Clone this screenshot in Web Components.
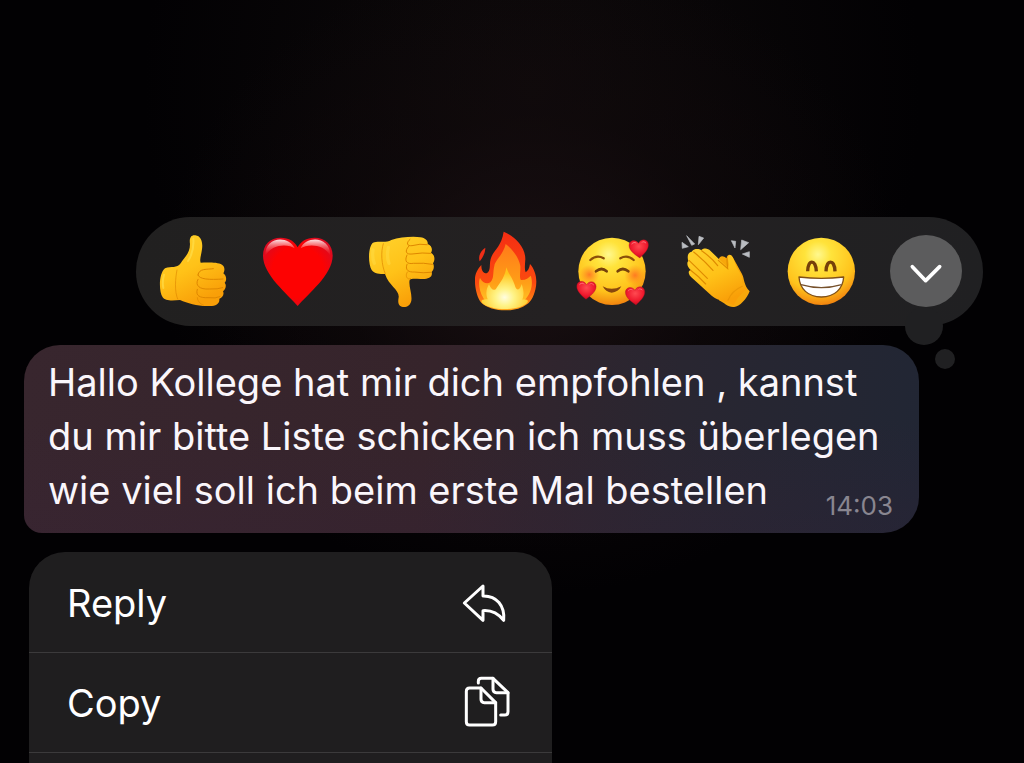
<!DOCTYPE html>
<html lang="de">
  <head>
    <meta charset="utf-8" />
    <meta name="viewport" content="width=device-width, initial-scale=1" />
    <title>Chat</title>
    <style>
      body {
        margin: 0;
        background: #020103;
        font-family: Inter, "Liberation Sans", sans-serif;
      }
    </style>
  </head>

  <body>
    <message-overlay>
      <reaction-bar slot="reactions">
        <reaction-button name="thumbs-up"></reaction-button>
        <reaction-button name="heart"></reaction-button>
        <reaction-button name="thumbs-down"></reaction-button>
        <reaction-button name="fire"></reaction-button>
        <reaction-button name="adore"></reaction-button>
        <reaction-button name="clap"></reaction-button>
        <reaction-button name="grin"></reaction-button>
        <reaction-button name="more"></reaction-button>
      </reaction-bar>
      <chat-bubble slot="message" time="14:03"
        >Hallo Kollege hat mir dich empfohlen , kannst<br />du mir bitte Liste schicken ich muss überlegen<br />wie viel soll ich beim erste Mal bestellen</chat-bubble
      >
      <context-menu slot="menu">
        <menu-row icon="reply">Reply</menu-row>
        <menu-row icon="copy">Copy</menu-row>
      </context-menu>
    </message-overlay>
  </body>

  <script type="text/javascript">
    const smallHeart = (x, y, turn) => `
      <g transform="translate(${x} ${y}) rotate(${turn})">
        <path fill="url(#h)" stroke="#a80b20" stroke-width="1" d="M0 29C-9 21-30 7-29-11C-28-26-8-30 0-15C8-30 28-26 29-11C30 7 9 21 0 29Z"/>
        <path fill="#ff8c91" opacity=".7" d="M-22-12C-20-22-9-22-6-15C-11-19-17-18-22-12ZM8-15C12-22 22-21 23-12C18-18 13-19 8-15Z"/>
      </g>`;

    const skin = `
      <linearGradient id="s" x1="0" y1="0" x2=".5" y2="1">
        <stop offset="0" stop-color="#ffd32e"/><stop offset=".55" stop-color="#ffc218"/><stop offset="1" stop-color="#f99f08"/>
      </linearGradient>`;

    const face = `
      <radialGradient id="f" cx=".45" cy=".25" r=".78">
        <stop offset="0" stop-color="#fff88e"/><stop offset=".25" stop-color="#ffe33b"/>
        <stop offset=".7" stop-color="#ffc31c"/><stop offset="1" stop-color="#f07c0d"/>
      </radialGradient>`;

    const REACTIONS = {
      "thumbs-up": {
        box: "81 75 216 216",
        art: `<defs>${skin}</defs>
          <path fill="url(#s)" d="M105 175C125 168 140 176 152 160C164 141 180 130 180 102C177 83 184 74 196 76C214 78 219 98 216 118C214 135 208 148 212 158C230 158 262 156 276 164C286 170 284 184 280 190C291 198 290 212 284 218C291 226 286 240 279 244C284 254 276 264 268 266C270 280 258 288 240 288C205 290 175 280 150 270C130 272 105 274 98 262C86 245 86 190 105 175Z"/>
          <path fill="none" stroke="#ffe455" stroke-width="6" stroke-linecap="round" opacity=".55" d="M190 86C192 112 188 132 174 153M102 194Q96 214 100 234"/>
          <g fill="none" stroke="#df8700" stroke-width="3" stroke-linecap="round">
            <path d="M204 195C206 174 232 179 250 176"/>
            <path d="M204 195C207 208 237 210 279 207"/>
            <path d="M204 208C194 226 208 239 238 237Q264 238 278 233"/>
            <path d="M202 238C195 258 211 264 234 263Q258 266 270 260"/>
            <path d="M202 263Q202 278 221 286M141 180C136 205 133 244 143 267" opacity=".65"/>
          </g>`
      },
      heart: {
        box: "395 75 216 216",
        art: `<defs>
            <linearGradient id="l" x1="0" y1="0" x2="0" y2="1"><stop offset="0" stop-color="#fff" stop-opacity=".9"/><stop offset="1" stop-color="#ff4340" stop-opacity="0"/></linearGradient>
            <radialGradient id="r" cx=".5" cy=".5" r=".57"><stop offset=".65" stop-color="#fd0202"/><stop offset="1" stop-color="#dc0a20"/></radialGradient>
          </defs>
          <path fill="url(#r)" d="M502 288C473 252 398 195 398 137C398 103 420 83 451 83C476 83 493 94 502 112C511 94 528 83 553 83C584 83 607 103 607 137C607 195 531 252 502 288Z"/>
          <path fill="url(#l)" d="M405 138C403 77 476 76 493 115C476 103 426 99 405 138ZM511 115C526 77 601 77 600 138C580 99 529 103 511 115Z"/>`
      },
      "thumbs-down": {
        box: "49 75 216 216",
        art: `<defs>${skin}</defs>
          <path fill="url(#s)" d="M70 98C85 91 108 100 125 90C150 82 190 78 212 82C228 84 236 94 234 102C246 106 250 120 244 128C257 136 256 152 250 160C256 172 250 182 246 186C250 202 236 206 220 207C200 208 188 204 180 210C176 228 188 250 185 272C182 286 172 292 160 291C146 290 144 278 147 262C150 240 118 228 106 192C90 192 74 192 66 180C54 160 56 108 70 98Z"/>
          <path fill="none" stroke="#ffe14d" stroke-width="10" stroke-linecap="round" opacity=".4" d="M70 120Q67 145 74 160M116 112Q110 140 118 160"/>
          <g fill="none" stroke="#df8700" stroke-width="3" stroke-linecap="round">
            <path d="M181 88C169 98 171 109 187 107Q211 100 233 104"/>
            <path d="M177 109C164 124 169 134 187 132Q219 127 244 130"/>
            <path d="M172 135C163 155 172 163 191 160Q224 158 248 163"/>
            <path d="M172 163C165 181 178 187 194 186Q222 190 243 187"/>
            <path d="M173 186C164 201 176 211 183 206M101 101C93 126 95 163 107 192" opacity=".7"/>
          </g>`
      },
      fire: {
        box: "363 75 216 216",
        art: `<defs>
            <linearGradient id="o" x1="0" y1="0" x2="0" y2="1"><stop offset="0" stop-color="#f52d12"/><stop offset=".65" stop-color="#fa4a10"/><stop offset="1" stop-color="#ff9c14"/></linearGradient>
            <linearGradient id="m" x1="0" y1="0" x2="0" y2="1"><stop offset="0" stop-color="#ff7a19"/><stop offset=".6" stop-color="#ff9f17"/><stop offset="1" stop-color="#ffd02b"/></linearGradient>
            <radialGradient id="i" cx=".5" cy=".72" r=".58"><stop offset="0" stop-color="#fffde0"/><stop offset=".35" stop-color="#fff386"/><stop offset="1" stop-color="#ffc51b"/></radialGradient>
          </defs>
          <path fill="#ef2e17" d="M406 113C406 128 398 144 389 154C384 139 391 123 406 113Z"/>
          <path fill="url(#o)" d="M461 65C495 79 526 112 526 147C525 164 523 178 527 187C533 183 538 176 540 162C558 182 563 212 556 239C550 263 541 275 533 281C513 297 488 301 466 301C438 301 409 293 394 278C382 266 374 233 375 210C374 193 383 177 394 165C394 180 398 190 410 190C424 182 417 164 422 147C428 122 454 112 461 65Z"/>
          <path fill="url(#m)" d="M467 102C484 115 506 139 511 168C512 185 507 202 513 210C526 211 536 204 542 197C551 219 543 252 524 270C507 286 488 297 467 298C441 299 411 287 400 264C388 244 384 217 390 204C397 218 411 224 421 217C433 205 428 187 433 167C436 150 458 137 467 102Z"/>
          <path fill="url(#i)" d="M469 172C474 190 487 203 494 224C496 234 501 240 506 238C510 235 513 229 515 222C521 240 523 254 517 269C536 267 537 274 529 281C501 302 429 303 400 282C389 273 394 267 413 268C405 249 411 232 417 223C423 240 434 245 440 233C452 217 466 198 469 172Z"/>`
      },
      adore: {
        box: "48 75 216 216",
        art: `<defs>${face}
            <radialGradient id="b"><stop offset="0" stop-color="#ff6123" stop-opacity=".75"/><stop offset="1" stop-color="#ff7b18" stop-opacity="0"/></radialGradient>
            <radialGradient id="h" cx=".5" cy=".35" r=".7"><stop offset="0" stop-color="#ff4a51"/><stop offset=".6" stop-color="#ef192d"/><stop offset="1" stop-color="#b9071b"/></radialGradient>
          </defs>
          <circle cx="156" cy="184" r="101" fill="url(#f)"/>
          <circle cx="88" cy="194" r="30" fill="url(#b)"/>
          <circle cx="225" cy="196" r="32" fill="url(#b)"/>
          <path fill="none" stroke="#8c5009" stroke-width="7" stroke-linecap="round" d="M91 150Q110 133 131 145M181 145Q202 133 221 150"/>
          <path fill="none" stroke="#76410b" stroke-width="8" stroke-linecap="round" d="M108 184Q125 170 140 184M173 184Q188 170 205 184"/>
          <path fill="#89470d" d="M128 229Q154 244 184 229Q175 247 155 248Q137 246 128 229Z"/>
          ${smallHeart(237, 115, -5)}${smallHeart(79, 239, 2)}${smallHeart(226, 256, -4)}`
      },
      clap: {
        box: "362 75 216 216",
        art: `<defs>${skin}</defs>
          <g fill="#b9bcc1" stroke="#b9bcc1" stroke-width="2" stroke-linejoin="round">
            <path d="M379 77L403 102L394 106ZM416 79L430 84L414 104ZM365 97L384 110L366 115ZM513 92L526 94L524 114ZM544 90L565 98L541 119ZM567 125V142L546 132Z"/>
          </g>
          <path fill="#f7a70b" d="M474 151C478 136 488 136 499 145C499 134 510 130 517 141L545 192C552 204 550 226 568 244C560 267 535 293 520 291C502 292 491 278 476 271Z"/>
          <path fill="url(#s)" d="M384 154C380 139 382 127 394 125C404 113 417 118 423 120C434 112 444 117 450 122L502 173C510 165 500 151 504 139C511 127 520 144 525 162C530 180 546 190 545 212C545 224 553 230 560 238C544 247 527 269 521 286C501 275 476 274 454 257L398 206C382 195 382 181 392 181C378 168 380 156 384 154Z"/>
          <g fill="none" stroke="#df8b02" stroke-width="3.5" stroke-linecap="round">
            <path d="M424 122Q455 144 472 167"/>
            <path d="M400 126Q431 151 458 181"/>
            <path d="M386 151Q412 176 441 205"/>
            <path d="M391 181Q414 198 436 222"/>
            <path d="M474 151L502 176Q500 158 500 146"/>
            <path d="M546 229Q515 242 503 271" opacity=".5"/>
          </g>`
      },
      grin: {
        box: "46 75 216 216",
        art: `<defs>${face}</defs>
          <circle cx="155" cy="184" r="101" fill="url(#f)"/>
          <path fill="none" stroke="#75400a" stroke-width="10" d="M114 184C114 147 139 147 140 184M169 184C170 147 195 147 196 184"/>
          <path fill="#fff" stroke="#805018" stroke-width="4" stroke-linejoin="round" d="M88 201Q155 209 222 201C220 236 195 261 155 261C115 261 90 236 88 201Z"/>
          <path fill="none" stroke="#76512c" stroke-width="4" d="M94 224Q155 242 216 224"/>`
      },
      more: {
        box: "360 75 216 216",
        art: `<circle cx="468" cy="183" r="108" fill="#5c5c5d"/>
          <path fill="none" stroke="#fff" stroke-width="11" stroke-linecap="round" stroke-linejoin="round" d="M427 170L467 212L509 170"/>`
      }
    };

    const MENU_ICONS = {
      reply: {
        box: "66 15 144 162",
        art: `<path d="M129 45L73 96L129 148V119C155 117 174 127 191 148C195 104 170 74 129 75Z"/>`
      },
      copy: {
        box: "66 316 144 162",
        art: `<path d="M89 352H123L167 396V453Q167 463 157 463H89Q79 463 79 453V362Q79 352 89 352Z"/>
          <path d="M123 352V386Q123 396 133 396H167"/>
          <path d="M115 337V332Q115 323 124 323H159L204 366V423Q204 433 194 433H182"/>
          <path d="M159 323V356Q159 366 169 366H204"/>`
      }
    };

    class MessageOverlay extends HTMLElement {
      constructor() {
        super();
        this.attachShadow({ mode: "open" });
        this.shadowRoot.innerHTML = `
      <style>
        :host {
          display: flex;
          flex-direction: column;
          gap: 19px;
          box-sizing: border-box;
          min-height: 100vh;
          padding: 217px 24px 0;
          background:
            radial-gradient(ellipse 36% 42% at 52% 36%, #190f12, #120a0c80 50%, transparent),
            radial-gradient(ellipse 38% 60% at 52% 12%, #0e0a0b, transparent),
            #020103;
        }
      </style>
      <slot name="reactions"></slot>
      <slot name="message"></slot>
      <slot name="menu"></slot>
    `;
      }
    }

    class ReactionBar extends HTMLElement {
      constructor() {
        super();
        this.attachShadow({ mode: "open" });
        this.shadowRoot.innerHTML = `
      <style>
        :host {
          display: flex;
          justify-content: space-between;
          position: relative;
          margin: 0 17px 0 112px;
          padding: 18px 21px 19px;
          border-radius: 55px;
          background: linear-gradient(90deg, #212020, #242122 50%, #202022);
        }

        /* thought-bubble tail */
        :host::before,
        :host::after {
          content: "";
          position: absolute;
          border-radius: 50%;
          background: #202022;
        }

        :host::before {
          right: 40px;
          bottom: -19px;
          width: 38px;
          height: 38px;
        }

        :host::after {
          right: 28px;
          bottom: -43px;
          width: 20px;
          height: 20px;
        }
      </style>
      <slot></slot>
    `;
      }
    }

    class ReactionButton extends HTMLElement {
      constructor() {
        super();
        this.attachShadow({ mode: "open" });
      }

      connectedCallback() {
        const name = this.getAttribute("name");
        const { box, art } = REACTIONS[name];
        this.shadowRoot.innerHTML = `
      <style>
        :host {
          display: block;
          position: relative;
          z-index: 1;
        }

        button {
          display: block;
          padding: 0;
          border: 0;
          border-radius: 50%;
          background: none;
          cursor: pointer;
        }

        svg {
          display: block;
          width: 72px;
          height: 72px;
          overflow: visible;
        }
      </style>
      <button type="button" aria-label="${name}">
        <svg viewBox="${box}" aria-hidden="true">${art}</svg>
      </button>
    `;
      }
    }

    class ChatBubble extends HTMLElement {
      constructor() {
        super();
        this.attachShadow({ mode: "open" });
      }

      connectedCallback() {
        this.shadowRoot.innerHTML = `
      <style>
        :host {
          display: block;
          margin-right: 81px;
          padding: 10px 26px 8px 24px;
          border-radius: 36px 36px 36px 18px;
          background:
            linear-gradient(180deg, transparent 40%, #37203a38),
            linear-gradient(97deg, #38262e, #36242b 45%, #292631 72%, #212634);
          color: #faf6fb;
          font-size: 38px;
          line-height: 54px;
        }

        p {
          margin: 0;
        }

        time {
          float: right;
          margin-top: 24px;
          color: #898690;
          font-size: 26px;
          line-height: 38px;
        }
      </style>
      <p><slot></slot><time>${this.getAttribute("time")}</time></p>
    `;
      }
    }

    class ContextMenu extends HTMLElement {
      constructor() {
        super();
        this.attachShadow({ mode: "open" });
        this.shadowRoot.innerHTML = `
      <style>
        :host {
          display: flex;
          flex: 1;
          flex-direction: column;
          box-sizing: border-box;
          width: 100%;
          max-width: 523px;
          margin-left: 5px;
          padding-top: 1px;
          border-radius: 36px 36px 0 0;
          background: #1f1e1f;
        }
      </style>
      <slot></slot>
    `;
      }
    }

    class MenuRow extends HTMLElement {
      constructor() {
        super();
        this.attachShadow({ mode: "open" });
      }

      connectedCallback() {
        const { box, art } = MENU_ICONS[this.getAttribute("icon")];
        this.shadowRoot.innerHTML = `
      <style>
        :host {
          display: block;
          border-bottom: 1px solid #3b3a3b;
        }

        button {
          display: flex;
          align-items: center;
          justify-content: space-between;
          width: 100%;
          height: 99px;
          padding: 0 42px 0 38px;
          border: 0;
          background: none;
          color: #fff;
          font: inherit;
          font-size: 38px;
          text-align: left;
          cursor: pointer;
        }

        svg {
          width: 48px;
          height: 54px;
          overflow: visible;
          fill: none;
          stroke: #fff;
          stroke-width: 9;
          stroke-linecap: round;
          stroke-linejoin: round;
        }
      </style>
      <button type="button">
        <slot></slot>
        <svg viewBox="${box}" aria-hidden="true">${art}</svg>
      </button>
    `;
      }
    }

    customElements.define("message-overlay", MessageOverlay);
    customElements.define("reaction-bar", ReactionBar);
    customElements.define("reaction-button", ReactionButton);
    customElements.define("chat-bubble", ChatBubble);
    customElements.define("context-menu", ContextMenu);
    customElements.define("menu-row", MenuRow);
  </script>
</html>
